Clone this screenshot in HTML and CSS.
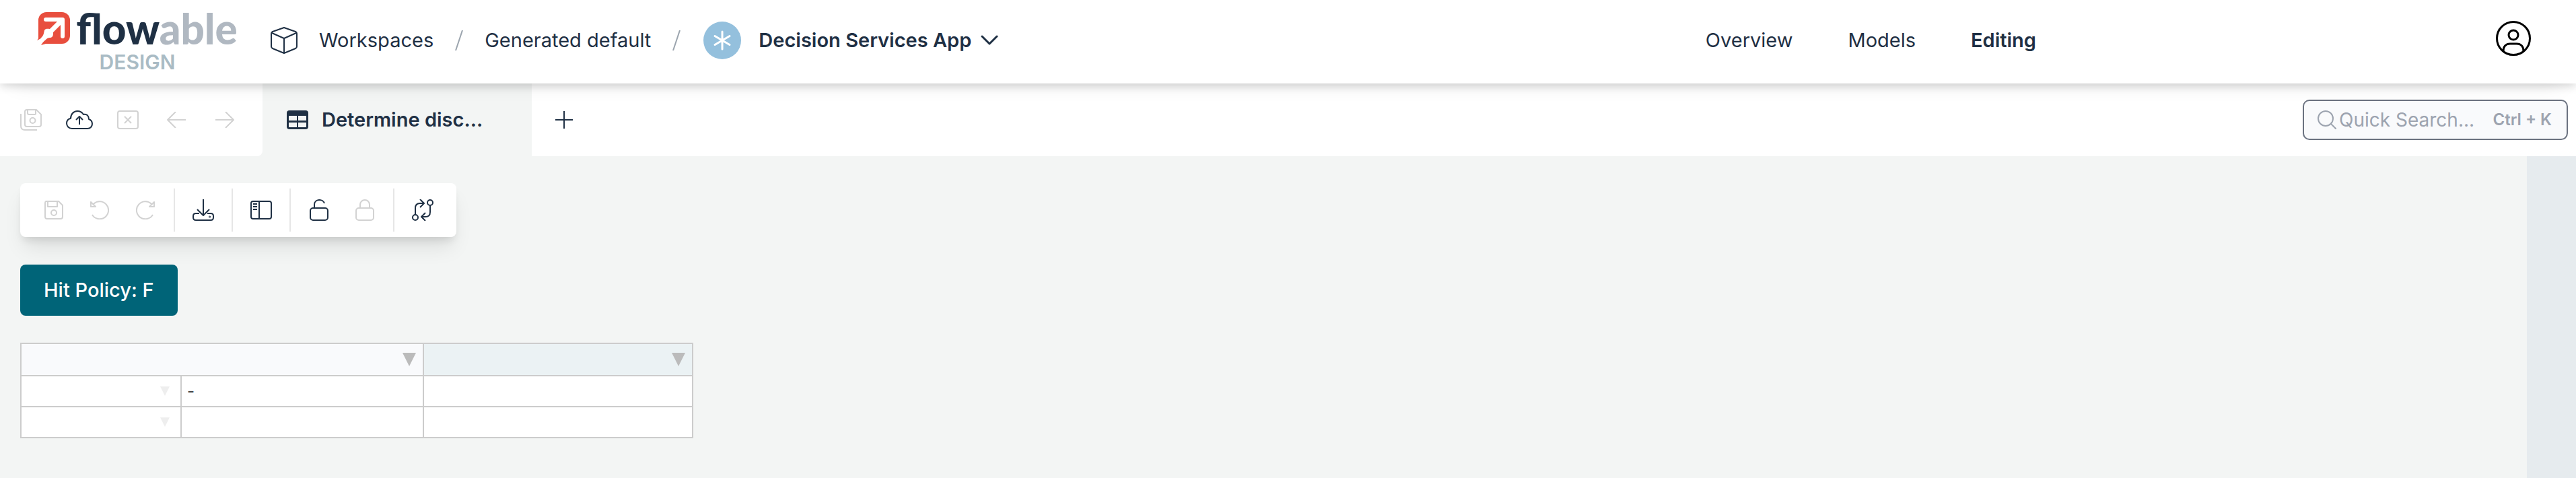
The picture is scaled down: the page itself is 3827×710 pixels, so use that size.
FILE: index.html
```html
<!DOCTYPE html>
<html lang="en">
<head>
<meta charset="utf-8">
<title>Flowable Design</title>
<link rel="stylesheet" href="styles.css">
</head>
<body>
  <header class="header">
    <div class="header-left">
      <a class="logo" href="#">
        <span class="logo-top">
          <svg width="50" height="50" viewBox="0 0 50 50">
            <path d="M14 1h23a12 12 0 0 1 12 12v23a12 12 0 0 1-12 12H13L6 50l4-6-6-3-4 2 2-3V13A12 12 0 0 1 14 1z" fill="#e84e3e"/>
            <path d="M13 12h25v25" fill="none" stroke="#fff" stroke-width="6" stroke-linecap="round" stroke-linejoin="round"/>
            <path d="M37 13L17 33" fill="none" stroke="#fff" stroke-width="7"/>
            <path d="M11 28c2-3 5-2 8-2l5 5c0 4 0 7-4 8-4 0-5 1-7 3l-8 7-4-4 7-8c2-3 2-5 3-9z" fill="#fff"/>
          </svg>
          <span class="logo-name">flow<span class="logo-light">able</span></span>
        </span>
        <span class="logo-design">DESIGN</span>
      </a>
      <nav class="crumbs">
        <svg width="40" height="40" viewBox="0 0 40 40" fill="none" stroke="#1f3044" stroke-width="2" stroke-linejoin="round">
          <path d="M20 1l17 6q2 1 2 3v19q0 2-2 3l-17 7-17-7q-2-1-2-3V10q0-2 2-3zM2 9l18 8 18-8M20 17v22"/>
        </svg>
        <a href="#">Workspaces</a>
        <svg width="12" height="30" viewBox="0 0 12 30"><path d="M11 0L1 30" stroke="#9aa3ad" stroke-width="2"/></svg>
        <a href="#">Generated default</a>
        <svg width="12" height="30" viewBox="0 0 12 30"><path d="M11 0L1 30" stroke="#9aa3ad" stroke-width="2"/></svg>
        <button class="app">
          <svg width="56" height="56" viewBox="0 0 56 56">
            <circle cx="28" cy="28" r="28" fill="#94c0dd"/>
            <path d="M28 15v26M17 21.500l22 13M39 21.500l-22 13" stroke="#fff" stroke-width="3" stroke-linecap="round"/>
          </svg>
          <span class="app-name">Decision Services App</span>
          <svg width="26" height="16" viewBox="0 0 26 16" fill="none" stroke="#1f3044" stroke-width="3" stroke-linecap="round" stroke-linejoin="round"><path d="M2 2l11 11L24 2"/></svg>
        </button>
      </nav>
    </div>
    <nav class="menu">
      <a href="#">Overview</a>
      <a href="#">Models</a>
      <a href="#" class="active">Editing</a>
    </nav>
    <button class="user" aria-label="Account">
      <svg width="52" height="52" viewBox="0 0 52 52" fill="none" stroke="#000" stroke-width="3">
        <circle cx="26" cy="26" r="24.500"/>
        <circle cx="26" cy="21" r="7"/>
        <path d="M11 45c0-7 4-11 10-11h10c6 0 10 4 10 11"/>
      </svg>
    </button>
  </header>

  <div class="tabs">
    <div class="tab-tools">
      <button class="icon off" aria-label="Save all" disabled>
        <svg width="32" height="32" viewBox="0 0 32 32"><path d="M10 1h14l7 7v15q0 3-3 3H10q-3 0-3-3V4q0-3 3-3zM11 1v5q0 2 2 2h9q1 0 1-1V1M1 7v18q0 6 6 6h18"/><circle cx="18.500" cy="17" r="4"/></svg>
      </button>
      <button class="icon" aria-label="Publish">
        <svg width="40" height="28" viewBox="0 0 40 28"><path d="M9 27C4 27 1 23 1 19s3-7 6-7C7 6 11 1 17 1c4 0 7 2 9 5 5-1 8 2 8 7 3 1 5 3 5 7 0 4-3 7-7 7zM20 21V9M15 14l5-5 5 5"/></svg>
      </button>
      <button class="icon off" aria-label="Close all" disabled>
        <svg width="32" height="28" viewBox="0 0 32 28"><rect x="1" y="1" width="30" height="26" rx="3"/><path d="M11 9l10 10M21 9L11 19"/></svg>
      </button>
      <button class="icon off" aria-label="Back" disabled>
        <svg width="28" height="24" viewBox="0 0 28 24"><path d="M28 12H1M13 0L1 12l12 12"/></svg>
      </button>
      <button class="icon off" aria-label="Forward" disabled>
        <svg width="28" height="24" viewBox="0 0 28 24"><path d="M0 12h27M15 0l12 12-12 12"/></svg>
      </button>
    </div>
    <button class="tab">
      <svg width="32" height="28" viewBox="0 0 32 28"><rect width="32" height="28" rx="4" fill="#1f3044"/><path d="M3 8h12v7H3zM17 8h12v7H17zM3 18h12v7H4q-1 0-1-1zM17 18h12v6q0 1-1 1H17z" fill="#f3f5f4"/></svg>
      <span class="tab-name">Determine disc...</span>
    </button>
    <div class="tab-rest">
      <button class="icon add" aria-label="Add tab">
        <svg width="26" height="26" viewBox="0 0 26 26"><path d="M13 0v26M0 13h26"/></svg>
      </button>
      <label class="search">
        <svg width="28" height="28" viewBox="0 0 28 28" fill="none" stroke="#9ca3af" stroke-width="2"><circle cx="12" cy="12" r="11"/><path d="M19 19l9 9"/></svg>
        <input type="text" placeholder="Quick Search..." aria-label="Quick Search">
        <span class="keys">Ctrl + K</span>
      </label>
    </div>
  </div>

  <div class="work">
    <main class="editor">
      <div class="toolbar">
        <div class="group">
          <button class="icon off" aria-label="Save" disabled>
            <svg width="28" height="28" viewBox="0 0 28 28"><path d="M3 1h18l6 6v17q0 3-3 3H4q-3 0-3-3V4q0-3 2-3zM5 1v8h14V1"/><circle cx="14" cy="18" r="4"/></svg>
          </button>
          <button class="icon off" aria-label="Undo" disabled>
            <svg width="28" height="28" viewBox="0 0 28 28"><path d="M5 5a13 13 0 1 1-2 16M1 2v7h7z"/></svg>
          </button>
          <button class="icon off" aria-label="Redo" disabled>
            <svg width="28" height="28" viewBox="0 0 28 28"><path d="M23 5a13 13 0 1 0 2 16M27 2v7h-7z"/></svg>
          </button>
        </div>
        <div class="group">
          <button class="icon" aria-label="Download">
            <svg width="32" height="32" viewBox="0 0 32 32"><path d="M16 0v23M7 15l9 9 9-9M10 21H5q-4 0-4 4v2q0 4 4 4h22q4 0 4-4v-2q0-4-4-4h-5"/><circle cx="25.500" cy="26" r="0.500"/></svg>
          </button>
        </div>
        <div class="group">
          <button class="icon" aria-label="Toggle panel">
            <svg width="32" height="28" viewBox="0 0 32 28"><rect x="1" y="1" width="30" height="26" rx="3"/><path d="M13 1v26M4 5h6M4 9h6M4 13h6"/></svg>
          </button>
        </div>
        <div class="group">
          <button class="icon" aria-label="Unlock">
            <svg width="28" height="32" viewBox="0 0 28 32"><rect x="1" y="13" width="26" height="18" rx="4"/><path d="M7 13V8c0-9 13-9 15-2"/></svg>
          </button>
          <button class="icon off" aria-label="Lock" disabled>
            <svg width="28" height="32" viewBox="0 0 28 32"><rect x="1" y="13" width="26" height="18" rx="4"/><path d="M7 13V8a7 7 0 0 1 14 0v5"/></svg>
          </button>
        </div>
        <div class="group">
          <button class="icon" aria-label="Compare">
            <svg width="32" height="32" viewBox="0 0 32 32"><circle cx="27" cy="5" r="4"/><circle cx="5" cy="27" r="4"/><path d="M5 23V13q0-7 7-7h6M12 0l6 6-6 6M27 9v10q0 7-7 7h-6M20 20l-6 6 6 6"/></svg>
          </button>
        </div>
      </div>

      <button class="policy">Hit Policy: F</button>

      <table class="rules">
        <colgroup>
          <col class="col-op">
          <col class="col-in">
          <col class="col-out">
        </colgroup>
        <thead>
          <tr>
            <th colspan="2" class="in"><svg class="arrow" width="20" height="20" viewBox="0 0 20 20"><path d="M0 0h20L10 20z" fill="#bbb"/></svg></th>
            <th class="out"><svg class="arrow" width="20" height="20" viewBox="0 0 20 20"><path d="M0 0h20L10 20z" fill="#bbb"/></svg></th>
          </tr>
        </thead>
        <tbody>
          <tr>
            <td class="op"><svg class="arrow" width="14" height="14" viewBox="0 0 14 14"><path d="M0 0h14L7 14z" fill="#eee"/></svg></td>
            <td>-</td>
            <td></td>
          </tr>
          <tr>
            <td class="op"><svg class="arrow" width="14" height="14" viewBox="0 0 14 14"><path d="M0 0h14L7 14z" fill="#eee"/></svg></td>
            <td></td>
            <td></td>
          </tr>
        </tbody>
      </table>
    </main>
    <aside class="side"></aside>
  </div>
</body>
</html>
```
FILE: styles.css
```css
* {
  box-sizing: border-box;
}
body {
  margin: 0;
  min-height: 100vh;
  display: flex;
  flex-direction: column;
  background-color: #f3f5f4;
  color: #1f3044;
  font-family: Inter, "Liberation Sans", sans-serif;
  font-size: 29px;
  line-height: 36px;
}
a {
  color: inherit;
  text-decoration: none;
}
button {
  border: none;
  padding: 0;
  background: none;
  color: inherit;
  font: inherit;
  cursor: pointer;
}
svg {
  display: block;
  flex: none;
}

/* header */
.header {
  position: relative;
  z-index: 1;
  display: grid;
  grid-template-columns: 66% auto 1fr;
  align-items: center;
  height: 124px;
  background-color: white;
  box-shadow: 0 20px 30px -20px rgba(0, 0, 0, 0.1), 0 4px 12px rgba(0, 0, 0, 0.15);
}
.header-left {
  display: flex;
  align-items: center;
  padding-left: 54px;
}
.logo {
  display: flex;
  flex-direction: column;
  align-items: center;
  width: 300px;
  padding-top: 2px;
}
.logo-top {
  display: flex;
  align-items: center;
  gap: 8px;
  height: 52px;
}
.logo-name {
  font-family: Lato, sans-serif;
  font-size: 62px;
  font-weight: 900;
  line-height: 52px;
}
.logo-light {
  color: #b0b8c1;
}
.logo-design {
  margin-top: 6px;
  color: #a9bbc4;
  font-size: 30px;
  font-weight: 600;
}
.crumbs {
  display: flex;
  align-items: center;
  gap: 32px;
  padding-left: 48px;
  padding-bottom: 4px;
  white-space: nowrap;
}
.app {
  display: flex;
  align-items: center;
  gap: 14px;
  padding-left: 2px;
}
.app-name {
  padding-left: 12px;
  font-weight: 600;
}
.menu {
  display: flex;
  gap: 82px;
  padding-left: 8px;
  padding-bottom: 4px;
}
.menu .active {
  font-weight: 600;
}
.user {
  justify-self: end;
  margin-right: 67px;
  padding-bottom: 10px;
}

/* tabs */
.tabs {
  display: flex;
  height: 108px;
}
.tab-tools {
  display: flex;
  align-items: center;
  padding: 0 20px 0 10px;
  background-color: white;
  border-radius: 0 0 8px 0;
}
.icon {
  display: flex;
  align-items: center;
  justify-content: center;
  width: 68px;
  height: 64px;
}
.icon svg {
  fill: none;
  stroke: #1f3044;
  stroke-width: 2;
  stroke-linejoin: round;
}
.icon.off svg {
  stroke: #d2d2d2;
}
.tab-tools .icon {
  width: 72px;
}
.tab {
  display: flex;
  align-items: center;
  gap: 20px;
  width: 400px;
  padding-left: 36px;
}
.tab-name {
  font-weight: 600;
}
.tab-rest {
  flex: 1;
  display: flex;
  align-items: center;
  justify-content: space-between;
  padding: 0 12px 0 14px;
  background-color: white;
}
.search {
  display: flex;
  align-items: center;
  gap: 4px;
  width: 394px;
  height: 60px;
  padding: 0 22px 0 20px;
  border: 2px solid #6b7280;
  border-radius: 10px;
  background-color: #f9fafc;
  color: #9ca3af;
  font-size: 28px;
}
.search input {
  flex: 1;
  min-width: 0;
  padding: 0;
  border: none;
  outline: none;
  background: none;
  color: #1f3044;
  font: inherit;
}
.search input::placeholder {
  color: #9ca3af;
}
.keys {
  font-size: 24px;
  font-weight: 600;
  white-space: nowrap;
}

/* editor */
.work {
  flex: 1;
  display: flex;
}
.editor {
  flex: 1;
  display: flex;
  flex-direction: column;
  align-items: flex-start;
  padding: 40px 30px;
}
.side {
  width: 73px;
  background-color: #e6ebee;
}
.toolbar {
  display: flex;
  padding: 8px;
  border-radius: 8px;
  background-color: white;
  box-shadow: 0 20px 30px -6px rgba(0, 0, 0, 0.1), 0 8px 12px -4px rgba(0, 0, 0, 0.1);
}
.group {
  display: flex;
  padding: 0 8px;
}
.group + .group {
  border-left: 2px solid #e6e6e6;
}
.policy {
  position: relative;
  margin: 41px 0 40px;
  padding: 20px 35px;
  border-radius: 8px;
  background-color: #006478;
  color: white;
  font-weight: 500;
}
.rules {
  width: 1000px;
  table-layout: fixed;
  border-collapse: collapse;
  background-color: white;
  color: #444;
  font-size: 24px;
  line-height: 30px;
}
.col-op {
  width: 238px;
}
.col-in {
  width: 360px;
}
.col-out {
  width: 400px;
}
.rules th,
.rules td {
  height: 46px;
  padding: 0 8px;
  border: 2px solid #ccc;
}
.rules th {
  height: 48px;
  padding: 0 10px;
}
.rules .in {
  background-color: #f9fafc;
}
.rules .out {
  background-color: #ebf2f4;
}
.rules .op {
  padding-right: 16px;
}
.arrow {
  margin-left: auto;
}
```
